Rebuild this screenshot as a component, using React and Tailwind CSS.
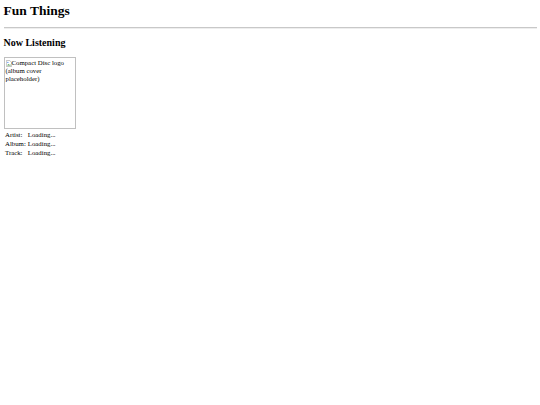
import React from "react";

const rows = [
  { label: "Artist:", value: "Loading..." },
  { label: "Album:", value: "Loading..." },
  { label: "Track:", value: "Loading..." },
];

function BrokenImage() {
  return (
    <svg width="6" height="7" viewBox="0 0 16 18" className="inline-block align-top mt-[1px]">
      <path d="M1 1h9l5 5v11H1z" fill="#fff" stroke="#999" strokeWidth="1.5" />
      <path d="M3 14l3-4 3 3 2-2 2 3z" fill="#4a9a4a" />
      <circle cx="5" cy="6" r="1.5" fill="#3b82f6" />
    </svg>
  );
}

export default function App() {
  return (
    <div className="min-h-screen bg-white text-black px-[3.5px] pt-[2px] font-['Liberation_Serif',serif]">
      <h1 className="text-[13.5px] leading-[17px] font-bold">Fun Things</h1>
      <hr className="mt-[8px] border-t border-[#c8c8c8] border-b-[#eee] border-b" />

      <h2 className="mt-[8px] text-[10px] leading-[12px] font-bold">Now Listening</h2>

      <div className="mt-[8px] w-[72px] h-[72px] border border-[#c0c0c0] p-[1px] text-[6.8px] leading-[7.6px] overflow-hidden">
        <BrokenImage />
        <span>Compact Disc logo (album cover placeholder)</span>
      </div>

      <table className="mt-[1px] text-[6.8px] leading-[9px] border-collapse">
        <tbody>
          {rows.map((r) => (
            <tr key={r.label}>
              <td className="pl-[1.5px] pr-[2px]">{r.label}</td>
              <td>{r.value}</td>
            </tr>
          ))}
        </tbody>
      </table>
    </div>
  );
}
